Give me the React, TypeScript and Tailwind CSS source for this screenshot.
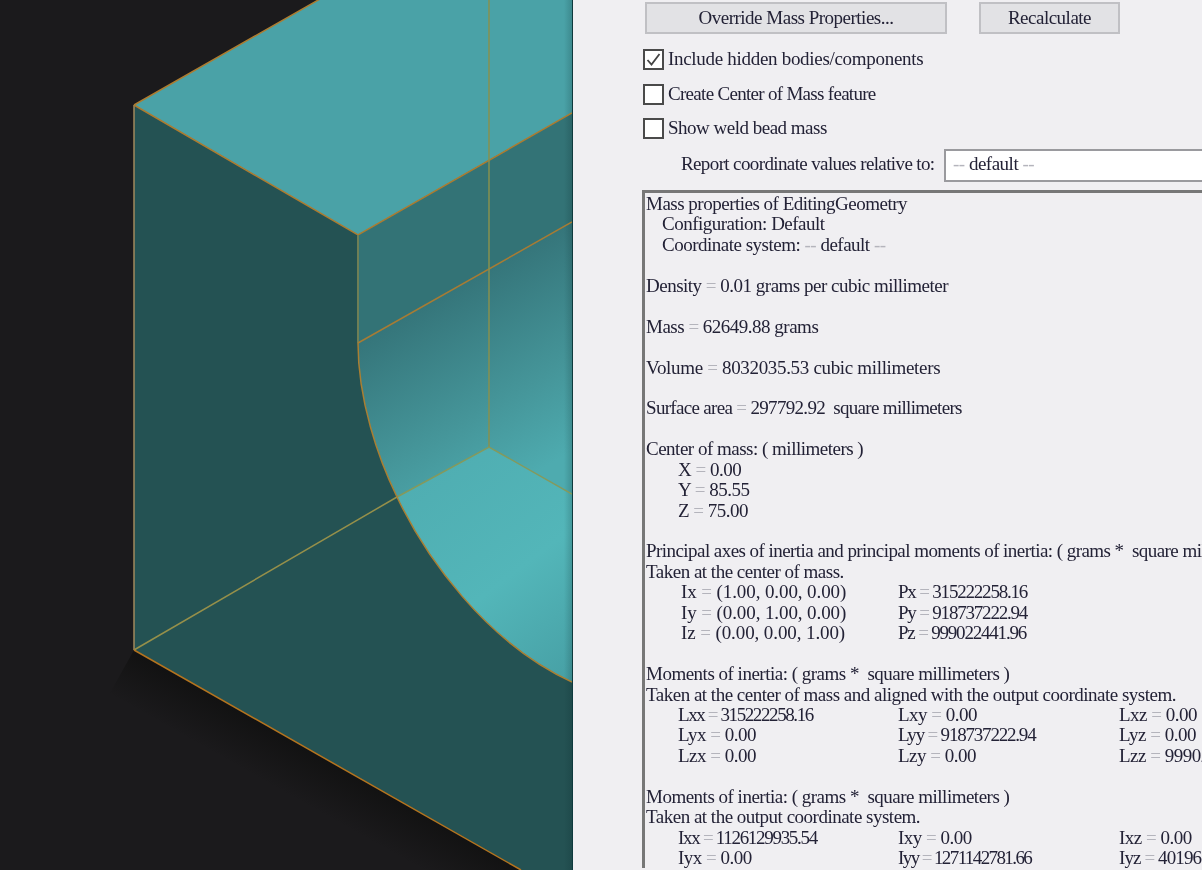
const lineClass = "whitespace-pre h-[20.45px] leading-[20.45px]";

// the equals signs and dashes are nearly invisible in the dialog text
function Faint({ text }: { text: string }) {
  return (
    <>
      {text.split(/(=|--)/).map((part, i) =>
        part === "=" || part === "--" ? (
          <span key={i} className="text-[#b4b4bc]">{part}</span>
        ) : (
          <span key={i}>{part}</span>
        ),
      )}
    </>
  );
}

function Line({ children = "", className = "" }: { children?: string; className?: string }) {
  return (
    <div className={`${lineClass} ${className}`}>
      {children ? <Faint text={children} /> : " "}
    </div>
  );
}

function Cell({ text, className = "" }: { text?: string; className?: string }) {
  return (
    <span className={className}>
      <Faint text={text || ""} />
    </span>
  );
}

function Row({ a, b, c, aClass = "pl-[32px]", bClass = "", cClass = "" }: { a: string; b: string; c: string; aClass?: string; bClass?: string; cClass?: string }) {
  return (
    <div className={`${lineClass} grid grid-cols-[252px_221px_1fr]`}>
      <Cell text={a} className={aClass} />
      <Cell text={b} className={bClass} />
      <Cell text={c} className={cClass} />
    </div>
  );
}

function Check({ checked, label, className = "" }: { checked?: boolean; label: string; className?: string }) {
  return (
    <div className="flex h-[21px] items-center gap-[4px]">
      <span className="flex h-[21px] w-[21px] shrink-0 items-center justify-center border-2 border-[#4a4a4a] bg-white">
        {checked && (
          <svg width="15" height="15" viewBox="0 0 15 15" fill="none" stroke="#444" strokeWidth="1.8">
            <path d="M1.5 8 L5.5 12.5 L13.5 2" />
          </svg>
        )}
      </span>
      <span className={className}>{label}</span>
    </div>
  );
}

const arc = "C 358 400, 378 458, 397 497 C 425 556, 485 642, 572 682";

function Viewport() {
  return (
    <div className="h-[870px] w-[572px] shrink-0 bg-[#1b1a1c]">
      <svg width="572" height="870" viewBox="0 0 572 870">
        <defs>
          <linearGradient id="cyl" gradientUnits="userSpaceOnUse" x1="440" y1="295" x2="540" y2="470">
            <stop offset="0" stopColor="#35757a" />
            <stop offset="0.6" stopColor="#459599" />
            <stop offset="1" stopColor="#4eabaf" />
          </linearGradient>
          <linearGradient id="floor" gradientUnits="userSpaceOnUse" x1="410" y1="470" x2="570" y2="680">
            <stop offset="0" stopColor="#4fadb1" />
            <stop offset="0.55" stopColor="#53b6b9" />
            <stop offset="1" stopColor="#47a0a5" />
          </linearGradient>
          <linearGradient id="edge" gradientUnits="userSpaceOnUse" x1="564" y1="0" x2="572" y2="0">
            <stop offset="0" stopColor="#0a2a2c" stopOpacity="0" />
            <stop offset="1" stopColor="#0a2a2c" stopOpacity="0.2" />
          </linearGradient>
          <linearGradient id="shade" gradientUnits="userSpaceOnUse" x1="327" y1="760" x2="303" y2="803">
            <stop offset="0" stopColor="#111111" stopOpacity="0.9" />
            <stop offset="1" stopColor="#111111" stopOpacity="0" />
          </linearGradient>
        </defs>
        <path d="M134 650 L540 881 L516 924 L110 693 Z" fill="url(#shade)" />
        <path d="M134 105 L320 -1 L572 -1 L572 113 L358 235 Z" fill="#4aa2a7" />
        <path d={`M134 105 L358 235 L358 343 ${arc} L572 870 L521 870 L134 650 Z`} fill="#245253" />
        <path d="M358 235 L572 113 L572 222 L358 343 Z" fill="#337376" />
        <path d="M358 343 L572 222 L572 682 L397 497 C 378 458, 358 400, 358 343 Z" fill="url(#cyl)" />
        <path d="M397 497 L489 447 L572 494 L572 682 C 485 642, 425 556, 397 497 Z" fill="url(#floor)" />
        <rect x="564" y="0" width="8" height="870" fill="url(#edge)" />
        <g fill="none" strokeWidth="1.5">
          <path d="M134 650 L134 105" stroke="#a08a5c" />
          <path d="M134 105 L320 -1 M134 105 L358 235 L572 113" stroke="#ad7c30" />
          <path d="M358 235 L358 343" stroke="#6f7f56" strokeWidth="2" />
          <path d="M358 343 L572 222" stroke="#a87c34" />
          <path d="M489 0 L489 447" stroke="#87904f" />
          <path d="M572 494 L489 447 L397 497" stroke="#85995c" />
          <path d="M397 497 L134 650" stroke="#96904a" />
          <path d="M134 650 L521 870" stroke="#b5741f" />
          <path d={`M358 343 ${arc}`} stroke="#a97f33" />
        </g>
      </svg>
    </div>
  );
}

export default function App() {
  return (
    <div className="flex h-[870px] w-[1202px] overflow-hidden bg-[#1b1a1c] font-['Liberation_Serif',serif] text-[19px] tracking-[-0.5px] text-[#232236]">
      <Viewport />
      <div className="h-[870px] flex-1 overflow-hidden border-l border-[#0f3a3d] bg-[#f0eff2] pl-[69px] pt-[2px]">
        <div className="blur-[0.4px]">
          <div className="flex gap-[32px] pl-[3px]">
            <button className="h-[32px] w-[302px] border-2 border-[#c0c0c4] bg-[#e2e2e5] pb-[2px]">Override Mass Properties...</button>
            <button className="h-[32px] w-[141px] border-2 border-[#c0c0c4] bg-[#e2e2e5] pb-[2px]">Recalculate</button>
          </div>
          <div className="mt-[15px] flex flex-col gap-[13.5px] pl-[1px]">
            <Check checked label="Include hidden bodies/components" className="tracking-[-0.3px]" />
            <Check label="Create Center of Mass feature" className="tracking-[-0.7px]" />
            <Check label="Show weld bead mass" />
          </div>
          <div className="mt-[10px] flex h-[33px] items-center pl-[39px]">
            <span className="w-[263px] shrink-0 whitespace-nowrap pb-[3px] tracking-[-0.62px]">Report coordinate values relative to:</span>
            <div className="flex h-[33px] w-[400px] shrink-0 items-center whitespace-pre border-2 border-[#9a9a9e] bg-white pb-[3px] pl-[7px]">
              <span><Faint text="-- default --" /></span>
            </div>
          </div>
          <div className="mt-[8px] w-[700px] border-l-[3px] border-t-[3px] border-[#777] pl-[1px] pt-[1px]">
            <Line>Mass properties of EditingGeometry</Line>
            <Line className="pl-[16px]">Configuration: Default</Line>
            <Line className="pl-[16px]">Coordinate system: -- default --</Line>
            <Line />
            <Line>Density = 0.01 grams per cubic millimeter</Line>
            <Line />
            <Line>Mass = 62649.88 grams</Line>
            <Line />
            <Line className="tracking-[-0.33px]">Volume = 8032035.53 cubic millimeters</Line>
            <Line />
            <Line className="tracking-[-0.68px]">Surface area = 297792.92  square millimeters</Line>
            <Line />
            <Line>Center of mass: ( millimeters )</Line>
            <Line className="pl-[32px]">X = 0.00</Line>
            <Line className="pl-[32px]">Y = 85.55</Line>
            <Line className="pl-[32px]">Z = 75.00</Line>
            <Line />
            <Line className="tracking-[-0.55px]">Principal axes of inertia and principal moments of inertia: ( grams *  square millimeters )</Line>
            <Line>Taken at the center of mass.</Line>
            <Row a="Ix = (1.00, 0.00, 0.00)" b="Px = 315222258.16" c="" aClass="pl-[35px] tracking-[-0.1px]" bClass="tracking-[-1.2px]" />
            <Row a="Iy = (0.00, 1.00, 0.00)" b="Py = 918737222.94" c="" aClass="pl-[35px] tracking-[-0.1px]" bClass="tracking-[-1.2px]" />
            <Row a="Iz = (0.00, 0.00, 1.00)" b="Pz = 999022441.96" c="" aClass="pl-[35px] tracking-[-0.1px]" bClass="tracking-[-1.2px]" />
            <Line />
            <Line>Moments of inertia: ( grams *  square millimeters )</Line>
            <Line>Taken at the center of mass and aligned with the output coordinate system.</Line>
            <Row a="Lxx = 315222258.16" b="Lxy = 0.00" c="Lxz = 0.00" aClass="pl-[32px] tracking-[-1.4px]" />
            <Row a="Lyx = 0.00" b="Lyy = 918737222.94" c="Lyz = 0.00" bClass="tracking-[-1.2px]" />
            <Row a="Lzx = 0.00" b="Lzy = 0.00" c="Lzz = 999022441.96" />
            <Line />
            <Line>Moments of inertia: ( grams *  square millimeters )</Line>
            <Line>Taken at the output coordinate system.</Line>
            <Row a="Ixx = 1126129935.54" b="Ixy = 0.00" c="Ixz = 0.00" aClass="pl-[32px] tracking-[-1.3px]" />
            <Row a="Iyx = 0.00" b="Iyy = 1271142781.66" c="Iyz = 40196" bClass="tracking-[-1.6px]" cClass="tracking-[-0.9px]" />
          </div>
        </div>
      </div>
    </div>
  );
}
